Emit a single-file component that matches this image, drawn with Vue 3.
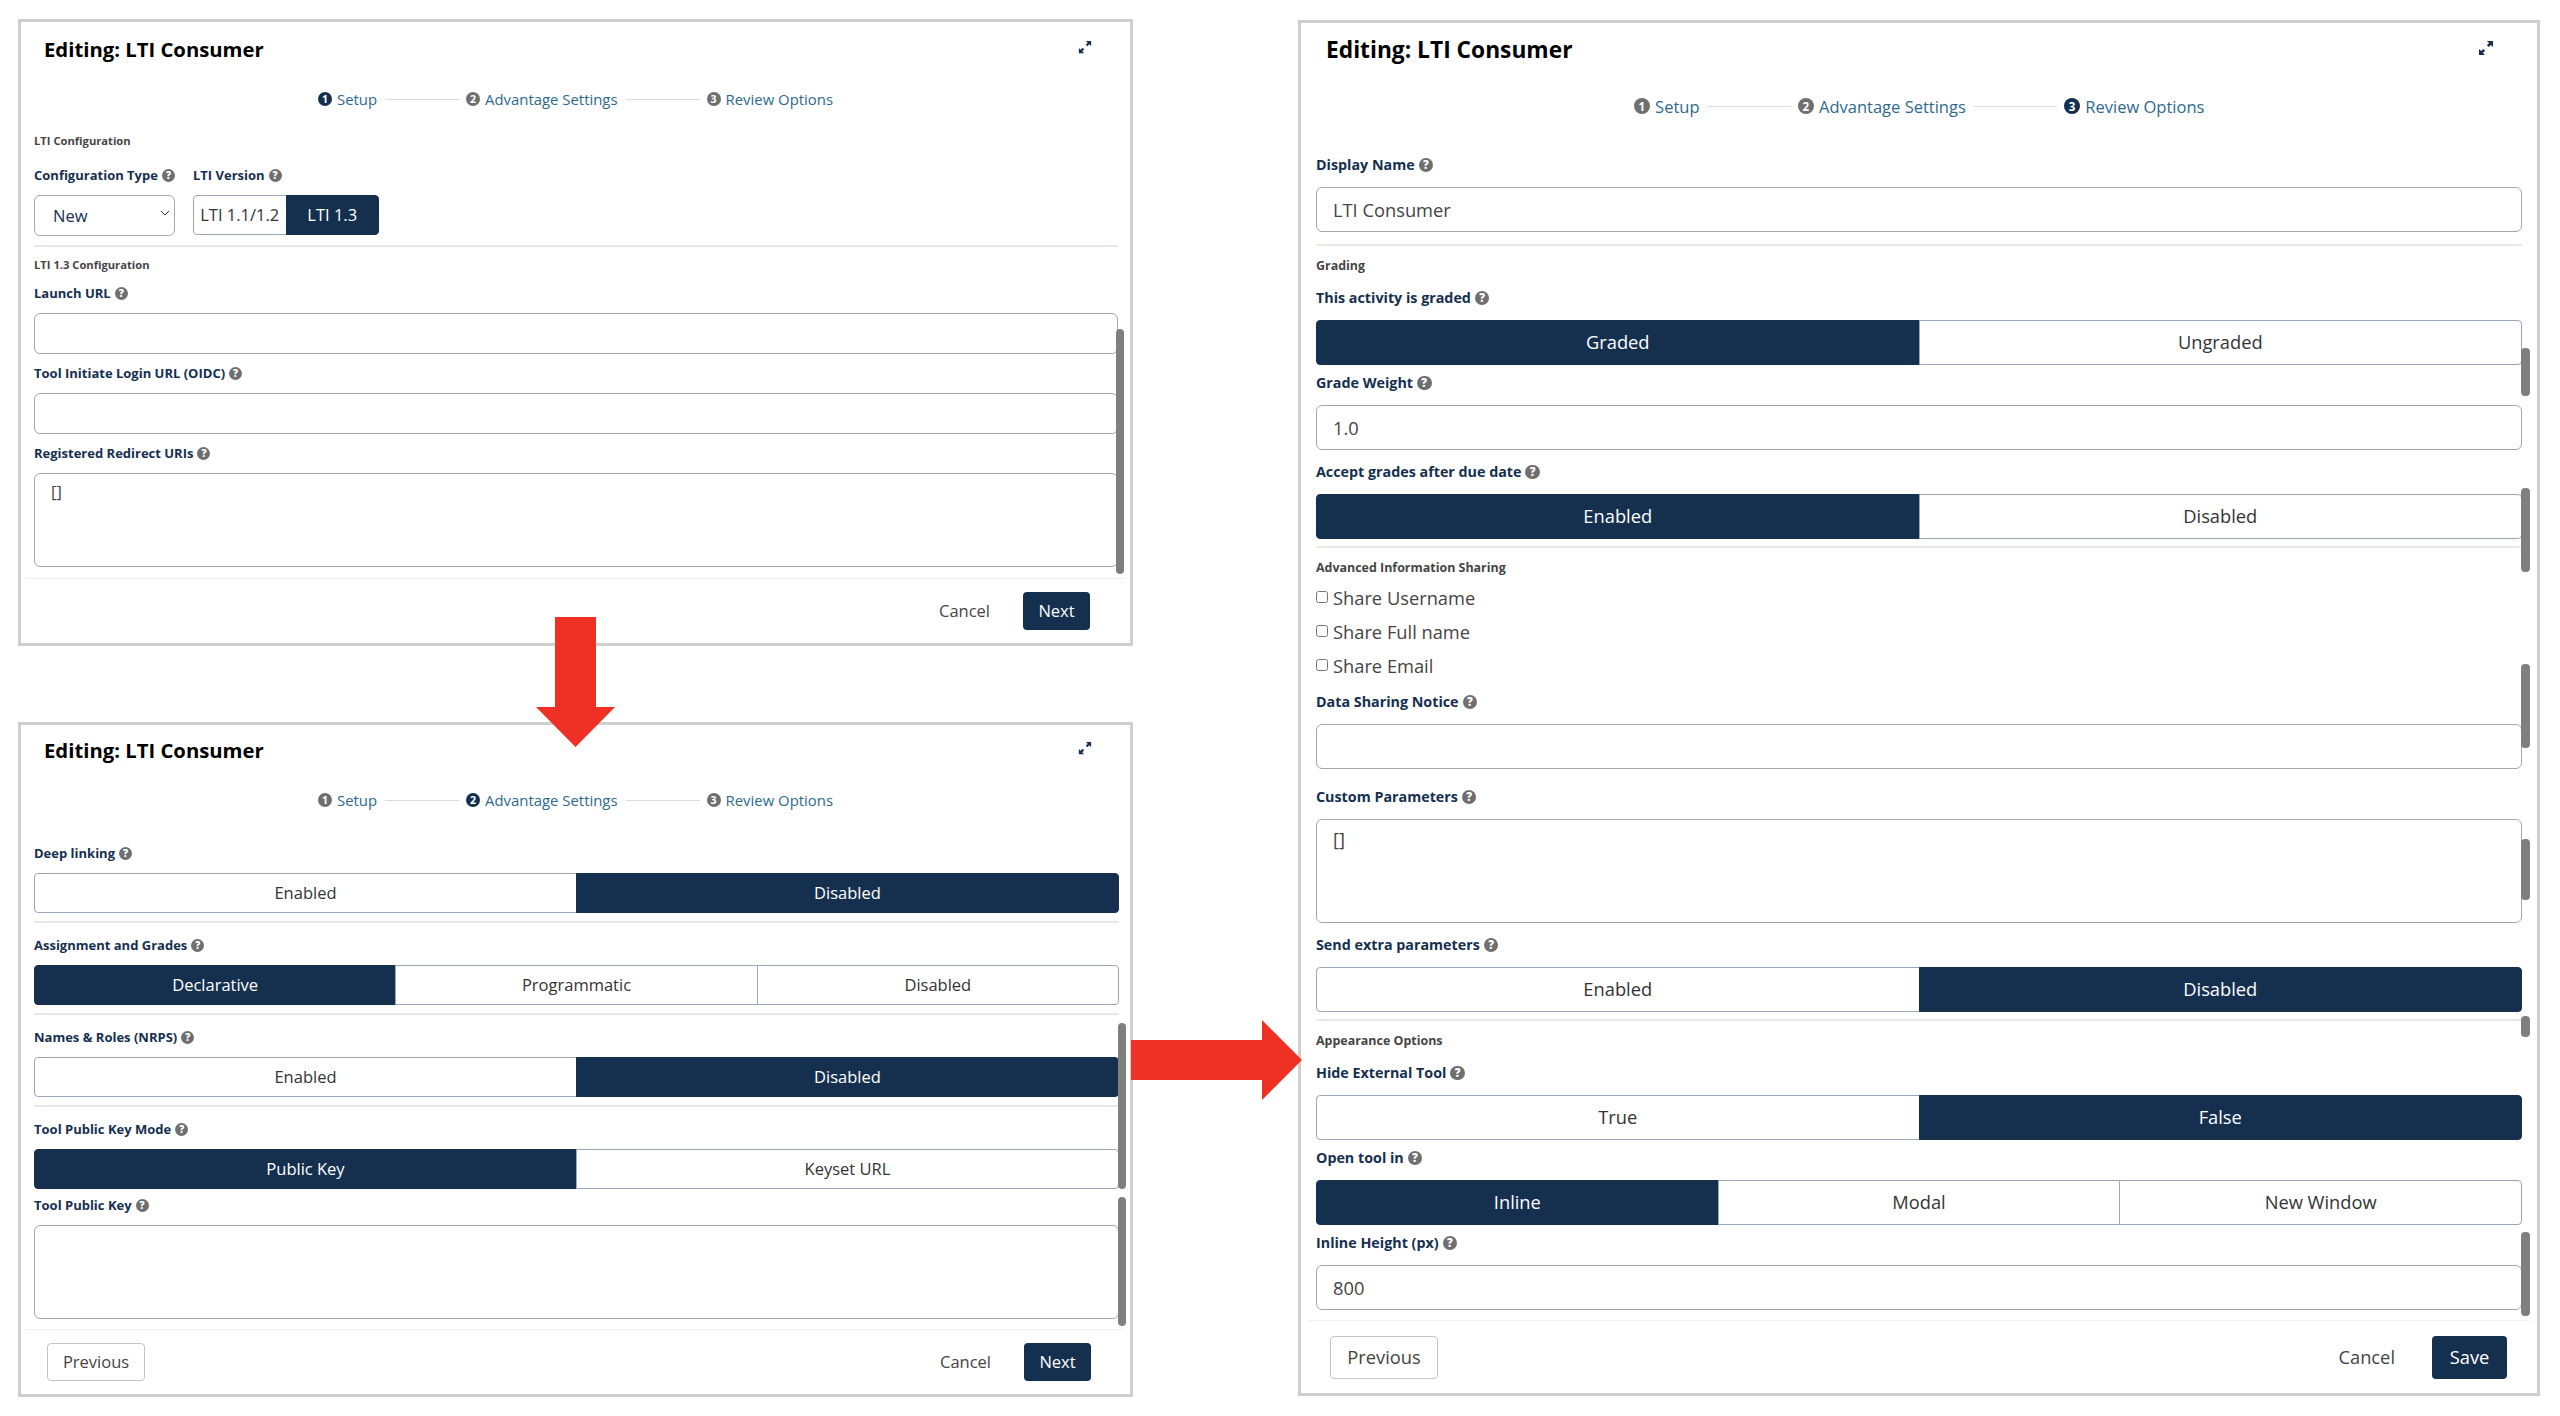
<script setup>
const en = ['Enabled', 'Disabled']
const panels = [
  {
    id: 'p1', active: 0, action: 'Next', prev: false,
    scroll: [{ top: 307, h: 245 }],
    items: [
      { k: 'section', text: 'LTI Configuration' },
      { k: 'config' },
      { k: 'divider' },
      { k: 'section', text: 'LTI 1.3 Configuration' },
      { k: 'field', label: 'Launch URL', ctrl: 'input', value: '' },
      { k: 'field', label: 'Tool Initiate Login URL (OIDC)', ctrl: 'input', value: '' },
      { k: 'field', label: 'Registered Redirect URIs', ctrl: 'textarea', value: '[]' },
    ],
  },
  {
    id: 'p2', active: 1, action: 'Next', prev: true,
    scroll: [{ top: 298, h: 166 }, { top: 472, h: 129 }],
    items: [
      { k: 'field', label: 'Deep linking', ctrl: 'toggle', options: en, on: 1 },
      { k: 'divider' },
      { k: 'field', label: 'Assignment and Grades', ctrl: 'toggle', options: ['Declarative', 'Programmatic', 'Disabled'], on: 0 },
      { k: 'divider' },
      { k: 'field', label: 'Names & Roles (NRPS)', ctrl: 'toggle', options: en, on: 1 },
      { k: 'divider' },
      { k: 'field', label: 'Tool Public Key Mode', ctrl: 'toggle', options: ['Public Key', 'Keyset URL'], on: 0 },
      { k: 'field', cls: 'tight', label: 'Tool Public Key', ctrl: 'textarea', value: '' },
    ],
  },
  {
    id: 'p3', active: 2, action: 'Save', prev: true,
    scroll: [
      { top: 325, h: 48 }, { top: 465, h: 84 }, { top: 641, h: 84 },
      { top: 816, h: 61 }, { top: 993, h: 21 }, { top: 1209, h: 84 },
    ],
    items: [
      { k: 'field', label: 'Display Name', ctrl: 'input', value: 'LTI Consumer' },
      { k: 'divider' },
      { k: 'section', text: 'Grading' },
      { k: 'field', label: 'This activity is graded', ctrl: 'toggle', options: ['Graded', 'Ungraded'], on: 0 },
      { k: 'field', cls: 'tight', label: 'Grade Weight', ctrl: 'input', value: '1.0' },
      { k: 'field', label: 'Accept grades after due date', ctrl: 'toggle', options: en, on: 0 },
      { k: 'divider' },
      { k: 'section', text: 'Advanced Information Sharing' },
      { k: 'check', text: 'Share Username' },
      { k: 'check', text: 'Share Full name' },
      { k: 'check', text: 'Share Email' },
      { k: 'field', label: 'Data Sharing Notice', ctrl: 'input', value: '' },
      { k: 'field', cls: 'loose', label: 'Custom Parameters', ctrl: 'textarea', value: '[]' },
      { k: 'field', label: 'Send extra parameters', ctrl: 'toggle', options: en, on: 1 },
      { k: 'divider' },
      { k: 'section', text: 'Appearance Options' },
      { k: 'field', label: 'Hide External Tool', ctrl: 'toggle', options: ['True', 'False'], on: 1 },
      { k: 'field', cls: 'tight', label: 'Open tool in', ctrl: 'toggle', options: ['Inline', 'Modal', 'New Window'], on: 0 },
      { k: 'field', cls: 'tight', label: 'Inline Height (px)', ctrl: 'input', value: '800' },
    ],
  },
]
const steps = ['Setup', 'Advantage Settings', 'Review Options']
const left = panels.slice(0, 2)
const right = panels.slice(2)
const columns = [left, right]
</script>

<template>
  <div class="page">
    <div v-for="(col, c) in columns" :key="c" class="column">
      <section v-for="p in col" :key="p.id" class="panel" :class="p.id">
        <header class="head">
          <h2 class="title">Editing: LTI Consumer</h2>
          <svg class="expand" viewBox="0 0 16 16" aria-hidden="true">
            <path d="M9 1h6v6l-2.1-2.1-2.2 2.2-1.8-1.8 2.2-2.2z" />
            <path d="M7 15H1V9l2.1 2.1 2.2-2.2 1.8 1.8-2.2 2.2z" />
          </svg>
        </header>
        <nav class="steps">
          <template v-for="(s, i) in steps" :key="s">
            <span v-if="i" class="step-line"></span>
            <span class="step-num" :class="{ on: i === p.active }">{{ i + 1 }}</span>
            <span class="step-text">{{ s }}</span>
          </template>
        </nav>
        <div class="body">
          <template v-for="(it, n) in p.items" :key="n">
            <p v-if="it.k === 'section'" class="section">{{ it.text }}</p>
            <hr v-else-if="it.k === 'divider'" class="divider" />
            <label v-else-if="it.k === 'check'" class="check">
              <input type="checkbox" /><span>{{ it.text }}</span>
            </label>
            <div v-else-if="it.k === 'config'" class="config">
              <div class="config-type">
                <div class="label">
                  Configuration Type
                  <span class="help">?</span>
                </div>
                <div class="select-wrap">
                  <select class="select"><option>New</option></select>
                  <svg class="chevron" viewBox="0 0 10 6" aria-hidden="true"><path d="M1 1l4 4 4-4" /></svg>
                </div>
              </div>
              <div>
                <div class="label">
                  LTI Version
                  <span class="help">?</span>
                </div>
                <div class="toggle version">
                  <span class="opt">LTI 1.1/1.2</span>
                  <span class="opt on">LTI 1.3</span>
                </div>
              </div>
            </div>
            <div v-else class="field" :class="it.cls">
              <div class="label">
                {{ it.label }}
                <span class="help">?</span>
              </div>
              <input v-if="it.ctrl === 'input'" class="input" type="text" :value="it.value" />
              <textarea v-else-if="it.ctrl === 'textarea'" class="input area" :value="it.value"></textarea>
              <div v-else class="toggle">
                <span v-for="(o, j) in it.options" :key="o" class="opt" :class="{ on: j === it.on }">{{ o }}</span>
              </div>
            </div>
          </template>
        </div>
        <footer class="foot">
          <button v-if="p.prev" class="btn ghost">Previous</button>
          <span class="foot-right">
            <button class="btn link">Cancel</button>
            <button class="btn primary">{{ p.action }}</button>
          </span>
        </footer>
        <i
          v-for="(s, i) in p.scroll"
          :key="i"
          class="scrollbar"
          :style="{ top: s.top + 'px', height: s.h + 'px' }"
        ></i>
      </section>
    </div>
    <svg class="arrow arrow-down" viewBox="0 0 79 130" aria-hidden="true">
      <polygon points="19,0 60,0 60,90 79,90 39.5,130 0,90 19,90" />
    </svg>
    <svg class="arrow arrow-right" viewBox="0 0 171 80" aria-hidden="true">
      <polygon points="0,20 131,20 131,0 171,40 131,80 131,60 0,60" />
    </svg>
  </div>
</template>

<style>
html, body { margin: 0; background: #fff; }
</style>

<style scoped>
.page {
  position: relative;
  display: grid;
  grid-template-columns: 1115px 1242px;
  column-gap: 165px;
  box-sizing: border-box;
  width: 2560px;
  height: 1416px;
  padding: 19px 20px 0 18px;
  background: #fff;
  font-family: "Open Sans", "Noto Sans", sans-serif;
  color: #333;
}
.column { display: flex; flex-direction: column; gap: 76px; }
.panel {
  position: relative;
  display: flex;
  flex-direction: column;
  box-sizing: border-box;
  border: 3px solid #cfcfcf;
  background: #fff;
  --title: 20.3px;
  --step: 14.9px;
  --circle: 14px;
  --circle-font: 10.5px;
  --step-line: 74px;
  --section: 11.2px;
  --label: 13px;
  --label-lh: 16px;
  --label-mb: 12px;
  --help: 13px;
  --ctl: 16.5px;
  --btn: 16.5px;
  --ctl-h: 41px;
  --area-h: 94px;
  --inset: 13px;
  --inset-right: 12px;
  --field-gap: 11px;
  --tight: 8px;
}
.p1 { height: 627px; }
.p2 { height: 675px; --inset-right: 11px; }
.p3 {
  height: 1376px;
  margin-top: 1px;
  --title: 22.75px;
  --step: 16.5px;
  --circle: 16.5px;
  --circle-font: 11.5px;
  --step-line: 83px;
  --section: 12.45px;
  --label: 14.3px;
  --label-lh: 18px;
  --label-mb: 13px;
  --help: 14.5px;
  --ctl: 18.3px;
  --btn: 18.3px;
  --ctl-h: 45px;
  --area-h: 104px;
  --inset: 15px;
  --inset-right: 15px;
  --field-gap: 13px;
  --tight: 9px;
}

.head {
  display: flex;
  align-items: center;
  justify-content: space-between;
  padding: 13px 38px 0 23px;
}
.p2 .head { padding-top: 11px; }
.p3 .head { padding: 13px 43px 0 25px; }
.title {
  margin: 0;
  font-size: var(--title);
  line-height: 28px;
  font-weight: 700;
  color: #000;
}
.expand { width: 14px; height: 14px; fill: #15304f; margin-top: -4px; }
.p3 .expand { width: 16px; height: 16px; }

.steps {
  display: flex;
  align-items: center;
  justify-content: center;
  margin-top: 26px;
  height: 20px;
  font-size: var(--step);
  color: #2d6a8e;
}
.p3 .steps { margin-top: 32px; }
.step-num {
  display: flex;
  align-items: center;
  justify-content: center;
  width: var(--circle);
  height: var(--circle);
  margin-right: 5px;
  border-radius: 50%;
  background: #6f6f6f;
  color: #fff;
  font-size: var(--circle-font);
  font-weight: 700;
}
.step-num.on { background: #15304f; }
.step-line {
  width: var(--step-line);
  height: 1px;
  margin: 0 7px 0 8px;
  background: #dcdcdc;
}

.body {
  flex: 1;
  min-height: 0;
  overflow: hidden;
  display: flex;
  flex-direction: column;
  padding: 25px var(--inset-right) 0 var(--inset);
}
.p2 .body { padding-top: 35px; }
.p3 .body { padding-top: 40px; }
.body > * { flex: none; }

.section {
  margin: 0;
  font-size: var(--section);
  line-height: 14px;
  font-weight: 700;
  color: #454545;
}
.p3 .section { line-height: 16px; }
.label {
  display: flex;
  align-items: center;
  gap: 4px;
  margin-bottom: var(--label-mb);
  font-size: var(--label);
  line-height: var(--label-lh);
  font-weight: 700;
  color: #15304f;
}
.help {
  display: inline-flex;
  align-items: center;
  justify-content: center;
  width: var(--help);
  height: var(--help);
  border-radius: 50%;
  background: #6f6f6f;
  color: #fff;
  font-size: calc(var(--help) - 3px);
  line-height: 1;
  font-weight: 800;
}

.field { margin-top: var(--field-gap); }
.field:first-child { margin-top: 0; }
.field.tight { margin-top: var(--tight); }
.field.loose { margin-top: 19px; }
.divider {
  width: 100%;
  height: 2px;
  box-sizing: border-box;
  margin: 8px 0 0;
  border: 0;
  background: #ebe8e4;
}
.p3 .divider { margin-top: 7px; }
.p1 .divider { margin-top: 9px; }
.p3 .field + .divider:nth-child(2) { margin-top: 12px; }
.divider + .field { margin-top: 14px; }
.divider + .section { margin-top: 11px; }
.p3 .divider + .section { margin-top: 12px; }
.section + .field { margin-top: 13px; }
.p3 .section + .field { margin-top: 15px; }
.p1 .section:first-child + .config { margin-top: 19px; }
.section + .check { margin-top: 4px; }
.check + .field { margin-top: 11px; }

.config { display: flex; gap: 18px; }
.config-type { width: 141px; }
.select-wrap { position: relative; }
.select {
  display: block;
  width: 100%;
  height: 41px;
  box-sizing: border-box;
  padding: 0 18px;
  border: 1px solid #a9a9a9;
  border-radius: 6px;
  background: #fff;
  appearance: none;
  font: inherit;
  font-size: var(--ctl);
  color: #15304f;
}
.chevron {
  position: absolute;
  right: 5px;
  top: 15px;
  width: 10px;
  height: 6px;
  fill: none;
  stroke: #333;
  stroke-width: 1;
}
.input {
  display: block;
  width: 100%;
  height: var(--ctl-h);
  box-sizing: border-box;
  padding: 0 16px 1px;
  border: 1px solid #a6a6a6;
  border-radius: 6px;
  background: #fff;
  outline: none;
  resize: none;
  font: inherit;
  font-size: var(--ctl);
  color: #444;
}
.area { height: var(--area-h); padding: 6px 16px; line-height: 1.4; }
.toggle {
  display: flex;
  height: var(--ctl-h);
  box-sizing: border-box;
  font-size: var(--ctl);
}
.p1 .toggle, .p2 .toggle { height: 40px; }
.version { width: 186px; }
.opt {
  flex: 1 1 0;
  display: flex;
  align-items: center;
  justify-content: center;
  margin-left: -1px;
  padding-bottom: 2px;
  border: 1px solid #98a7b9;
  background: #fff;
  color: #333;
  white-space: nowrap;
}
.opt:first-child { margin-left: 0; border-radius: 4px 0 0 4px; }
.opt:last-child { border-radius: 0 4px 4px 0; }
.opt.on { background: #15304f; border-color: #15304f; color: #fff; }

.check {
  display: flex;
  align-items: center;
  height: 34px;
  font-size: var(--ctl);
  color: #444;
}
.check input {
  width: 12px;
  height: 12px;
  margin: 0 5px 0 0;
}

.foot {
  display: flex;
  align-items: center;
  justify-content: space-between;
  margin: 0 5px;
  padding: 13px 35px 13px 21px;
  border-top: 1px solid #f0f0f0;
}
.p2 .foot { padding-right: 34px; }
.p3 .foot { margin: 0 7px; padding: 15px 23px 14px 22px; }
.foot-right { display: flex; align-items: center; gap: 33px; margin-left: auto; }
.p3 .foot-right { gap: 37px; }
.btn {
  height: 38px;
  box-sizing: border-box;
  border-radius: 4px;
  font: inherit;
  font-size: var(--btn);
}
.p3 .btn { height: 43px; }
.ghost { width: 98px; padding: 0 0 2px; border: 1px solid #c4c4c4; background: #fff; color: #444; }
.p3 .ghost { width: 108px; }
.link { padding: 0 0 2px; border: 0; background: none; color: #444; }
.primary { width: 67px; padding: 0 0 2px; border: 0; background: #15304f; color: #fff; }
.p3 .primary { width: 75px; }

.scrollbar {
  position: absolute;
  right: 6px;
  width: 8px;
  border-radius: 4px;
  background: #7f7f7f;
}
.p2 .scrollbar { right: 4px; }
.p3 .scrollbar { right: 7px; width: 9px; }

.arrow { position: absolute; fill: #ee3124; z-index: 2; }
.arrow-down { left: 536px; top: 617px; width: 79px; height: 130px; }
.arrow-right { left: 1131px; top: 1020px; width: 171px; height: 80px; }
</style>
